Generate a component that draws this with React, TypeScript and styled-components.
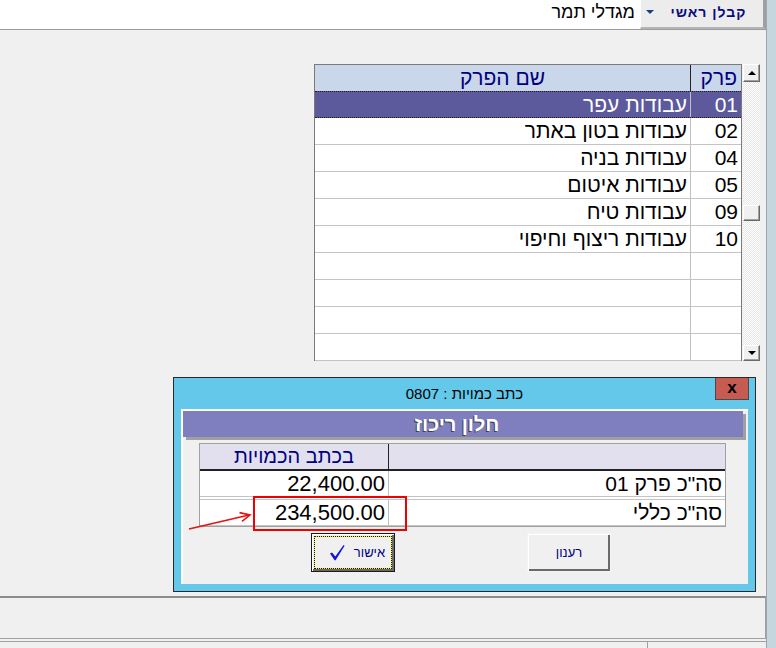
import React from 'react';
import styled, { createGlobalStyle } from 'styled-components';

const GlobalStyle = createGlobalStyle`
	*, *::before, *::after { box-sizing: border-box; }
	html, body { margin: 0; padding: 0; background: #f0f0f0; }
	body { font-family: "Liberation Sans", Arial, "DejaVu Sans", sans-serif; }
`;

const chapters = [
	{ code: '01', name: 'עבודות עפר' },
	{ code: '02', name: 'עבודות בטון באתר' },
	{ code: '04', name: 'עבודות בניה' },
	{ code: '05', name: 'עבודות איטום' },
	{ code: '09', name: 'עבודות טיח' },
	{ code: '10', name: 'עבודות ריצוף וחיפוי' },
];
const EMPTY_ROWS = 4;

const totals = [
	{ label: 'סה"כ פרק 01', amount: '22,400.00' },
	{ label: 'סה"כ כללי', amount: '234,500.00' },
];

const Page = styled.div`
	position: relative;
	width: 776px;
	height: 648px;
	display: flex;
	overflow: hidden;
	background: #f0f0f0;
`;

const Main = styled.div`
	width: 766px;
	display: flex;
	flex-direction: column;
`;

const RightStrip = styled.div`
	width: 10px;
	border-left: 1px solid #a4a4a4;
	background: #c6d6de;
`;

const TopBar = styled.header`
	height: 30px;
	background: #fff;
	border-bottom: 1px solid #9c9c9c;
	margin-bottom: 1px;
	display: flex;
	justify-content: flex-end;
`;

const OwnerName = styled.div`
	direction: rtl;
	align-self: center;
	padding: 0 5px 5px 0;
	font-size: 18px;
	color: #000;
`;

const ContractorButton = styled.div`
	width: 126px;
	display: flex;
	align-items: center;
	padding: 0 0 4px 5px;
	background: #ececec;
	border-left: 1px solid #fff;
	border-right: 3px solid #a0a0a0;
	border-bottom: 2px solid #b4b4b4;
`;

const DropArrow = styled.span`
	width: 0;
	height: 0;
	border-left: 4px solid transparent;
	border-right: 4px solid transparent;
	border-top: 4px solid #1c3c82;
`;

const ContractorLabel = styled.span`
	flex: 1;
	direction: rtl;
	text-align: center;
	font-size: 14px;
	font-weight: bold;
	color: #0b0b7a;
	letter-spacing: 1px;
`;

const Workspace = styled.main`
	flex: 1;
	display: flex;
	flex-direction: column;
	padding-top: 33px;
`;

const GridArea = styled.div`
	display: flex;
	gap: 1px;
	margin-left: 314px;
`;

const ChapterGrid = styled.div`
	width: 428px;
	height: 297px;
	border: 1px solid #7a7a7a;
	background: #fff;
`;

const GridHeader = styled.div`
	display: grid;
	grid-template-columns: 1fr 50px;
	height: 26px;
	background: #cad6ea;
`;

const HeaderCell = styled.div<{ $center?: boolean; $divider?: boolean }>`
	direction: rtl;
	text-align: ${(p) => (p.$center ? 'center' : 'right')};
	padding: 0 4px;
	font-size: 21px;
	line-height: 25px;
	color: #000080;
	border-right: ${(p) => (p.$divider ? '1px solid #222' : 'none')};
`;

const GridRow = styled.div<{ $selected?: boolean }>`
	display: grid;
	grid-template-columns: 1fr 50px;
	height: 27px;
	background: ${(p) => (p.$selected ? '#5c5a9c' : '#fff')};
	color: ${(p) => (p.$selected ? '#fff' : '#000')};
	border-top: ${(p) => (p.$selected ? '1px dotted #1a1a1a' : 'none')};
	border-bottom: 1px ${(p) => (p.$selected ? 'dotted #1a1a1a' : 'solid #c4c4c4')};
`;

const GridCell = styled.div<{ $divider?: boolean }>`
	direction: rtl;
	padding: 0 3px;
	font-size: 21px;
	line-height: 25px;
	white-space: nowrap;
	overflow: hidden;
	border-right: ${(p) => (p.$divider ? '1px solid #c0c0c0' : 'none')};
`;

const ScrollBar = styled.div`
	width: 17px;
	height: 297px;
	display: flex;
	flex-direction: column;
	background: repeating-conic-gradient(#ffffff 0 25%, #e6e6e6 0 50%) 0 0 / 2px 2px;
`;

const ScrollButton = styled.div<{ $height: number }>`
	height: ${(p) => p.$height}px;
	display: flex;
	align-items: center;
	justify-content: center;
	background: #f0f0f0;
	border-top: 1px solid #fff;
	border-left: 1px solid #fff;
	border-right: 1px solid #696969;
	border-bottom: 1px solid #696969;
	box-shadow: inset -1px -1px 0 #a0a0a0;
`;

const Thumb = styled(ScrollButton)`
	margin-top: 123px;
	margin-bottom: auto;
`;

const Triangle = styled.span<{ $down?: boolean }>`
	width: 0;
	height: 0;
	border-left: 4px solid transparent;
	border-right: 4px solid transparent;
	${(p) => (p.$down ? 'border-top: 4px solid #000;' : 'border-bottom: 4px solid #000;')}
`;

const Dialog = styled.section`
	margin: 16px 0 0 173px;
	width: 583px;
	height: 215px;
	display: flex;
	flex-direction: column;
	padding: 0 7px 7px;
	background: #63c8e9;
	border: 1px solid #2a2a2a;
`;

const TitleBar = styled.div`
	height: 31px;
	display: grid;
	grid-template-columns: 1fr auto 1fr;
	align-items: start;
`;

const Title = styled.div`
	grid-column: 2;
	direction: rtl;
	font-size: 15px;
	line-height: 31px;
	color: #000;
`;

const CloseButton = styled.div`
	grid-column: 3;
	justify-self: end;
	margin-right: -1px;
	width: 34px;
	height: 22px;
	display: flex;
	align-items: center;
	justify-content: center;
	background: #c65b51;
	border: 1px solid #4a4a4a;
	border-top: none;
	font-size: 17px;
	font-weight: bold;
	line-height: 1;
	padding-bottom: 3px;
	color: #000;
`;

const InnerPanel = styled.div`
	flex: 1;
	display: flex;
	flex-direction: column;
	background: #f0f0f0;
	border-top: 2px solid #fff;
	border-left: 2px solid #fff;
`;

const PanelHeader = styled.div`
	height: 26px;
	margin-right: 5px;
	padding-right: 12px;
	direction: rtl;
	text-align: center;
	background: #7f7ebf;
	box-shadow: 3px 3px 0 #a0a0a0;
	color: #fff;
	font-size: 20px;
	font-weight: bold;
	line-height: 26px;
	text-shadow: -1px 1px 0 #3c3c50;
`;

const SummaryTable = styled.div`
	margin: 6px 22px 0 16px;
	border: 1px solid #a0a0a0;
	background: #fff;
`;

const SummaryHead = styled.div`
	display: grid;
	grid-template-columns: 189px 1fr;
	height: 27px;
	background: #e2e0ee;
	border-bottom: 2px solid #222;
`;

const SummaryHeadCell = styled.div<{ $divider?: boolean }>`
	direction: rtl;
	text-align: center;
	font-size: 20px;
	line-height: 24px;
	color: #000080;
	border-right: ${(p) => (p.$divider ? '1px solid #222' : 'none')};
`;

const SummaryRow = styled.div<{ $gap?: boolean }>`
	display: grid;
	grid-template-columns: 189px 1fr;
	height: ${(p) => (p.$gap ? 27 : 26)}px;
	margin-top: ${(p) => (p.$gap ? 2 : 0)}px;
	border-top: ${(p) => (p.$gap ? '1px solid #c4c4c4' : 'none')};
	border-bottom: 1px solid #c4c4c4;
`;

const SummaryCell = styled.div<{ $divider?: boolean; $amount?: boolean }>`
	direction: rtl;
	padding: 0 3px;
	font-size: ${(p) => (p.$amount ? 22 : 21)}px;
	line-height: 25px;
	color: #000;
	white-space: nowrap;
	border-right: ${(p) => (p.$divider ? '1px solid #c0c0c0' : 'none')};
`;

const ButtonRow = styled.div`
	display: flex;
	gap: 132px;
	margin-top: 6px;
	padding-left: 128px;
`;

const DialogButton = styled.div<{ $default?: boolean }>`
	width: 84px;
	height: 39px;
	display: flex;
	align-items: stretch;
	padding: 2px;
	background: #f0f0f0;
	border: 1px solid ${(p) => (p.$default ? '#1a1a1a' : '#f4f4f4')};
	box-shadow: inset 1px 1px 0 #fff, inset -2px -2px 0 #6a6a6a;
`;

const ButtonFace = styled.div<{ $focused?: boolean }>`
	flex: 1;
	display: flex;
	align-items: center;
	justify-content: center;
	gap: 9px;
	padding: 0 0 1px ${(p) => (p.$focused ? 8 : 0)}px;
	border: 1px dotted ${(p) => (p.$focused ? '#1a1a1a' : 'transparent')};
	background: ${(p) =>
		p.$focused ? 'linear-gradient(#f0f0f0, #f0f0f0) padding-box, #f6f000 border-box' : 'transparent'};
	font-size: 13px;
	color: #000080;
	direction: ltr;
`;

const ButtonText = styled.span`
	direction: rtl;
`;

const BottomPanel = styled.div`
	height: 43px;
	border-top: 2px solid #8c8c8c;
	border-bottom: 1px solid #a0a0a0;
	border-right: 1px solid #a0a0a0;
	background: #f0f0f0;
`;

const Footer = styled.footer`
	height: 7px;
	margin-top: 2px;
	display: flex;
	border-top: 1px solid #a0a0a0;
`;

const FooterCell = styled.div<{ $width?: number }>`
	flex: ${(p) => (p.$width ? `0 0 ${p.$width}px` : '1')};
	border-left: ${(p) => (p.$width ? '1px solid #a0a0a0' : 'none')};
`;

const HighlightBox = styled.div`
	position: absolute;
	left: 253px;
	top: 496px;
	width: 154px;
	height: 35px;
	border: 2px solid #f20000;
	pointer-events: none;
`;

const ArrowSvg = styled.svg`
	position: absolute;
	left: 186px;
	top: 508px;
	pointer-events: none;
`;

const CheckMark = () => (
	<svg width="16" height="17" viewBox="0 0 16 17">
		<path d="M1 9.5 L3 8.5 L6.3 12.6 L14.6 1 L15.6 1.8 L6.6 16.2 L5.6 16.2 Z" fill="#1414d8" />
	</svg>
);

const App = () => {
	const emptyRows = Array.from({ length: EMPTY_ROWS });

	return (
		<Page>
			<GlobalStyle />
			<Main>
				<TopBar>
					<OwnerName>מגדלי תמר</OwnerName>
					<ContractorButton>
						<DropArrow />
						<ContractorLabel>קבלן ראשי</ContractorLabel>
					</ContractorButton>
				</TopBar>

				<Workspace>
					<GridArea>
						<ChapterGrid>
							<GridHeader>
								<HeaderCell $center $divider>
									שם הפרק
								</HeaderCell>
								<HeaderCell>פרק</HeaderCell>
							</GridHeader>
							{chapters.map((chapter, i) => (
								<GridRow key={chapter.code} $selected={i === 0}>
									<GridCell $divider>{chapter.name}</GridCell>
									<GridCell>{chapter.code}</GridCell>
								</GridRow>
							))}
							{emptyRows.map((_, i) => (
								<GridRow key={`empty-${i}`}>
									<GridCell $divider />
									<GridCell />
								</GridRow>
							))}
						</ChapterGrid>
						<ScrollBar>
							<ScrollButton $height={18}>
								<Triangle />
							</ScrollButton>
							<Thumb $height={16} />
							<ScrollButton $height={16}>
								<Triangle $down />
							</ScrollButton>
						</ScrollBar>
					</GridArea>

					<Dialog>
						<TitleBar>
							<Title>כתב כמויות : 0807</Title>
							<CloseButton>x</CloseButton>
						</TitleBar>
						<InnerPanel>
							<PanelHeader>חלון ריכוז</PanelHeader>
							<SummaryTable>
								<SummaryHead>
									<SummaryHeadCell $divider>בכתב הכמויות</SummaryHeadCell>
									<SummaryHeadCell />
								</SummaryHead>
								{totals.map((row, i) => (
									<SummaryRow key={row.label} $gap={i > 0}>
										<SummaryCell $divider $amount>
											{row.amount}
										</SummaryCell>
										<SummaryCell>{row.label}</SummaryCell>
									</SummaryRow>
								))}
							</SummaryTable>
							<ButtonRow>
								<DialogButton $default>
									<ButtonFace $focused>
										<CheckMark />
										<ButtonText>אישור</ButtonText>
									</ButtonFace>
								</DialogButton>
								<DialogButton>
									<ButtonFace>
										<ButtonText>רענון</ButtonText>
									</ButtonFace>
								</DialogButton>
							</ButtonRow>
						</InnerPanel>
					</Dialog>
				</Workspace>

				<BottomPanel />
				<Footer>
					<FooterCell />
					<FooterCell $width={119} />
				</Footer>
			</Main>
			<RightStrip />

			<HighlightBox />
			<ArrowSvg width="70" height="26" viewBox="0 0 70 26">
				<line x1="3" y1="21" x2="63" y2="7" stroke="#e81010" strokeWidth="1.6" />
				<polyline points="53.5,4.6 64,7 56,13.4" fill="none" stroke="#e81010" strokeWidth="1.6" />
			</ArrowSvg>
		</Page>
	);
};

export default App;
